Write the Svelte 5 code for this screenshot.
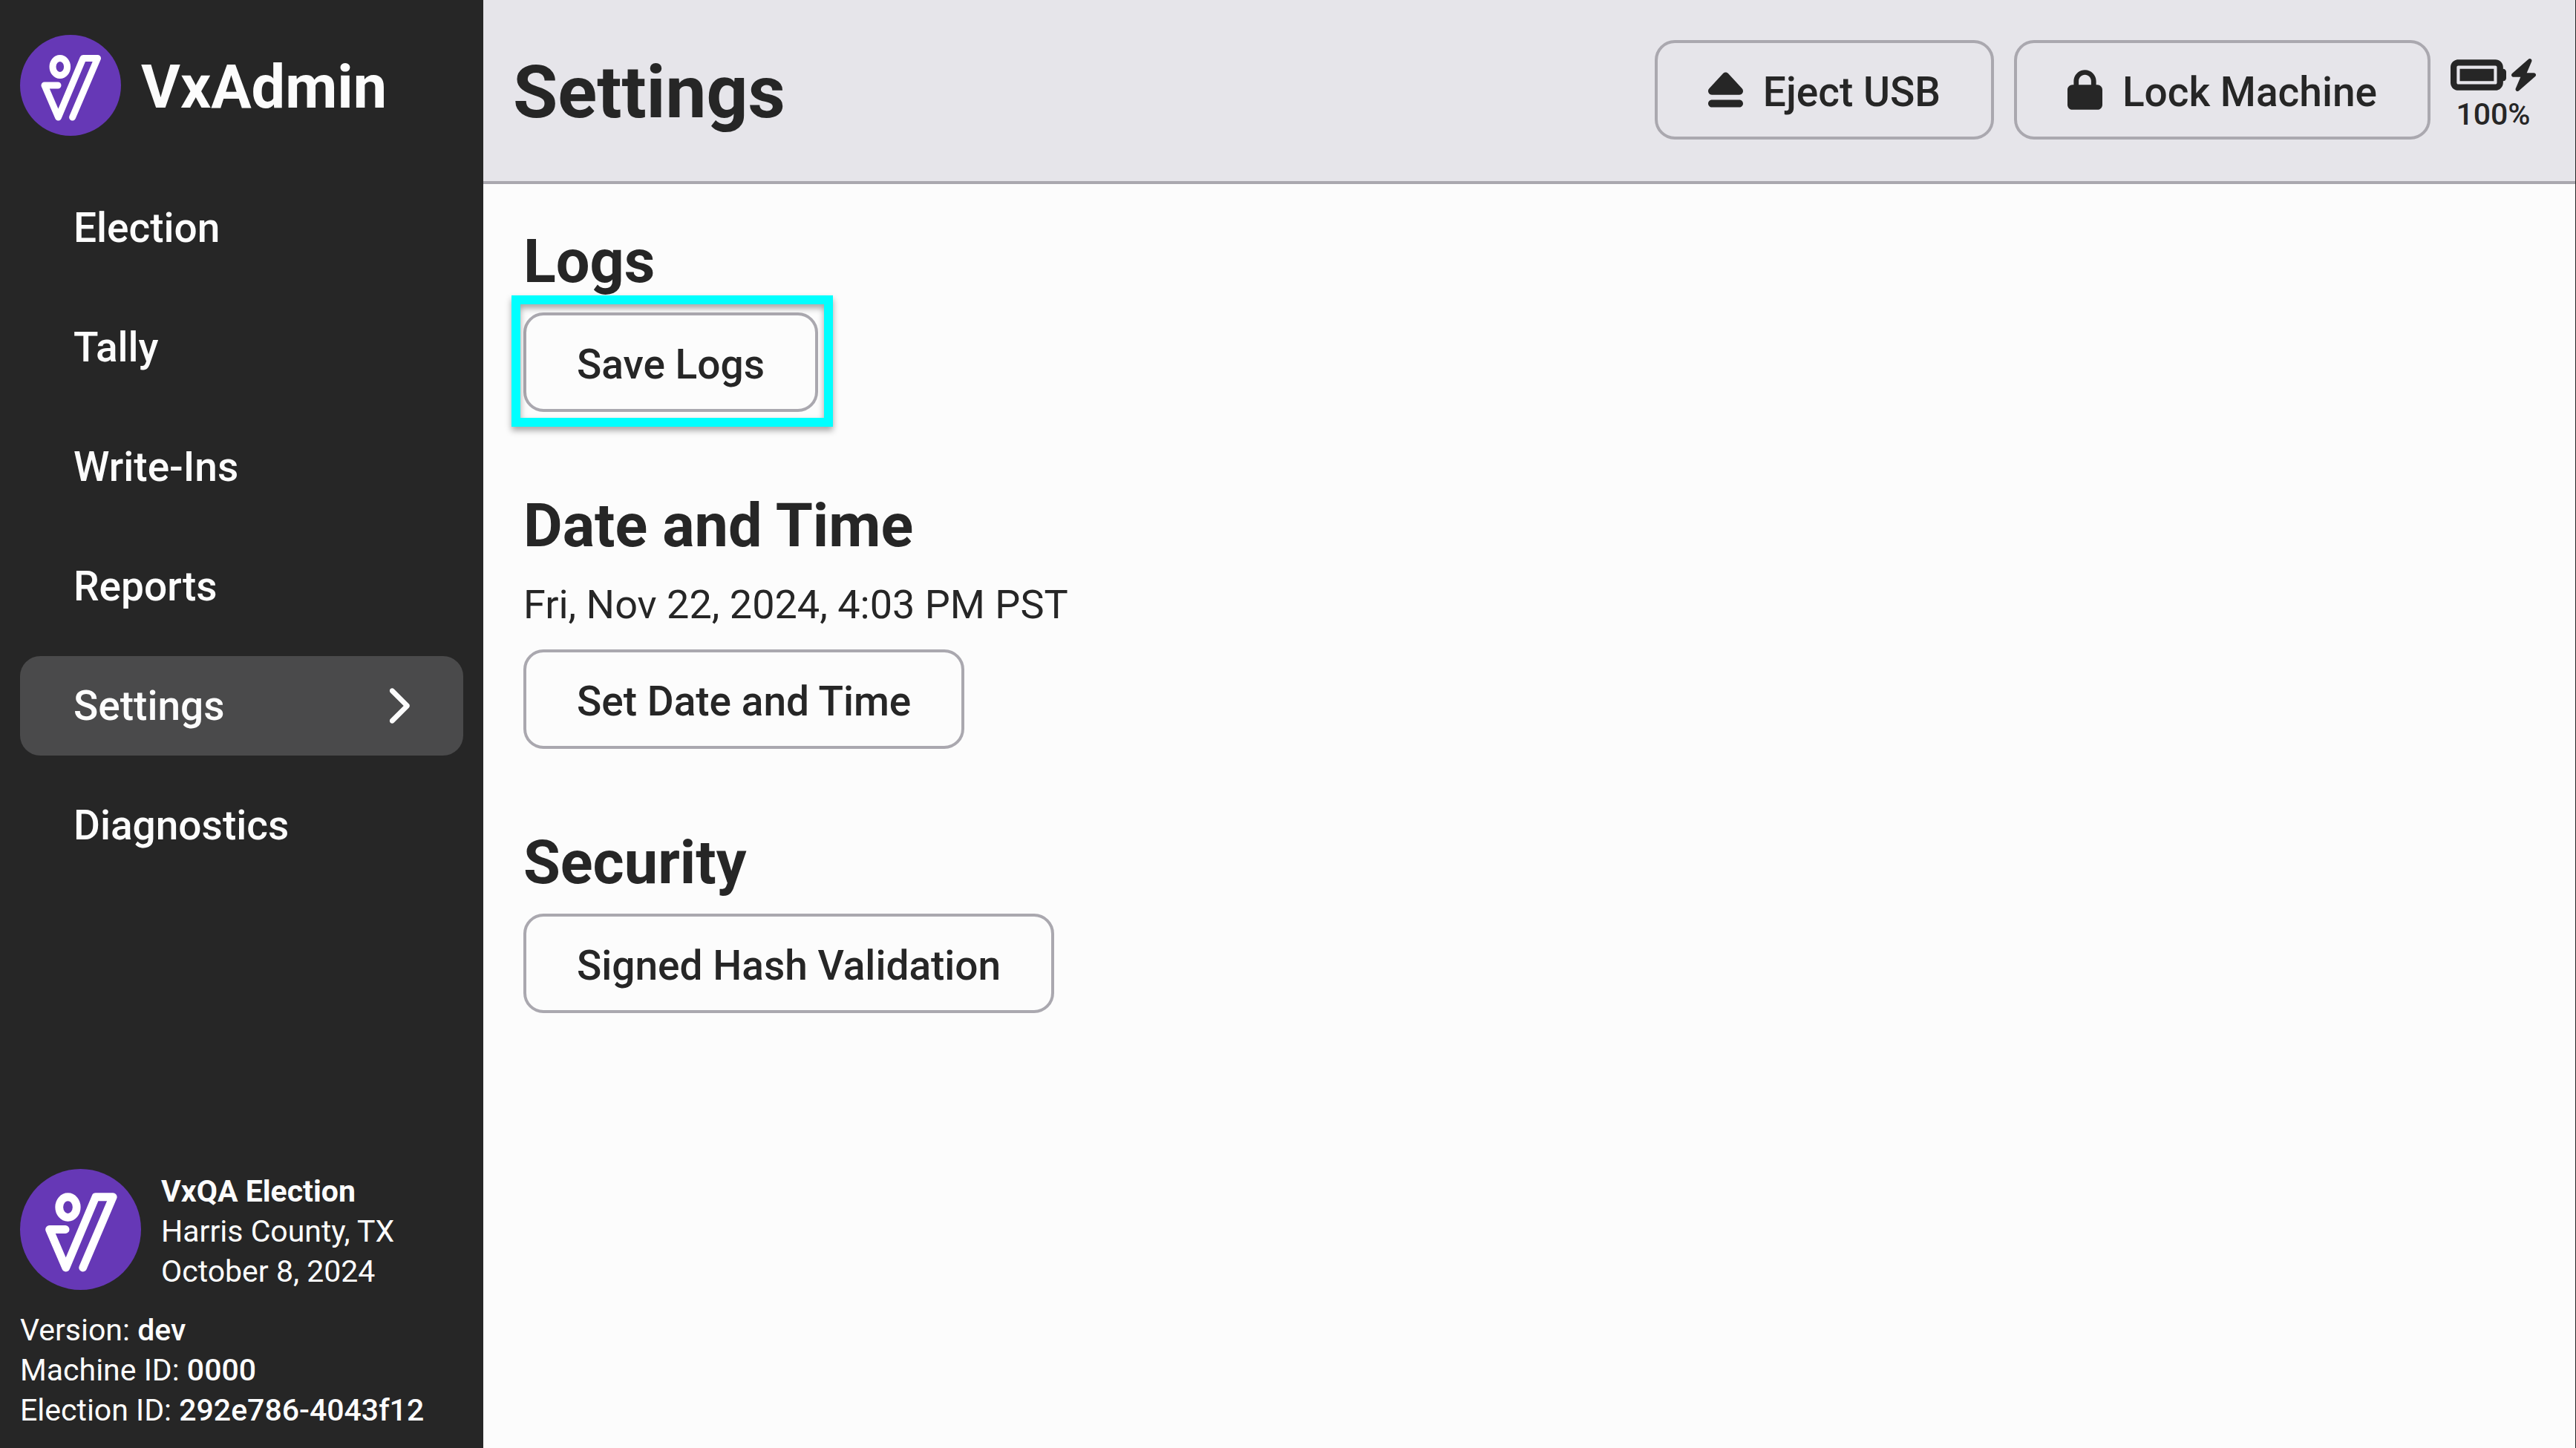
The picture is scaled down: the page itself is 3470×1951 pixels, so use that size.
<script>
  const navItems = ['Election', 'Tally', 'Write-Ins', 'Reports', 'Settings', 'Diagnostics'];
  let current = $state('Settings');

  const machine = [
    { label: 'Version', value: 'dev' },
    { label: 'Machine ID', value: '0000' },
    { label: 'Election ID', value: '292e786-4043f12' },
  ];
</script>

{#snippet logo()}
  <svg class="logo" viewBox="0 0 136 136" aria-hidden="true">
    <circle cx="68" cy="68" r="68" fill="#6638b6" />
    <g fill="none" stroke="#fff" stroke-width="9" stroke-linecap="round" stroke-linejoin="round">
      <ellipse cx="53.8" cy="43" rx="9.8" ry="11.5" />
      <path d="M51 68H33L51.5 111L85 31.5H104.5L70.6 111" />
    </g>
  </svg>
{/snippet}

<div class="app">
  <aside class="sidebar">
    <div class="brand">
      {@render logo()}
      <span class="brand-name">VxAdmin</span>
    </div>

    <nav class="nav">
      {#each navItems as item}
        <a
          href="#{item}"
          class="nav-item"
          class:active={item === current}
          aria-current={item === current ? 'page' : undefined}
          onclick={() => (current = item)}
        >
          {item}
          {#if item === current}
            <svg class="chevron" viewBox="0 0 320 512" aria-hidden="true">
              <path d="M310.6 233.4c12.5 12.5 12.5 32.8 0 45.3l-192 192c-12.5 12.5-32.8 12.5-45.3 0s-12.5-32.8 0-45.3L242.7 256 73.4 86.6c-12.5-12.5-12.5-32.8 0-45.3s32.8-12.5 45.3 0l192 192z" />
            </svg>
          {/if}
        </a>
      {/each}
    </nav>

    <footer class="info">
      <div class="election">
        {@render logo()}
        <div class="election-text">
          <div class="election-title">VxQA Election</div>
          <div>Harris County, TX</div>
          <div>October 8, 2024</div>
        </div>
      </div>
      <div>
        {#each machine as row}
          <div>{row.label}: <span class="value">{row.value}</span></div>
        {/each}
      </div>
    </footer>
  </aside>

  <div class="page">
    <header class="header">
      <h1>Settings</h1>
      <div class="actions">
        <button class="button">
          <svg class="icon" viewBox="0 0 448 512" aria-hidden="true">
            <path d="M224 32c13.5 0 26.3 5.6 35.4 15.6l176 192c12.9 14 16.2 34.3 8.6 51.8S419 320 400 320L48 320c-19 0-36.3-11.2-43.9-28.7s-4.3-37.7 8.6-51.8l176-192C197.7 37.6 210.5 32 224 32zM0 432c0-26.5 21.5-48 48-48l352 0c26.5 0 48 21.5 48 48s-21.5 48-48 48L48 480c-26.5 0-48-21.5-48-48z" />
          </svg>
          <span class="label">Eject USB</span>
        </button>
        <button class="button">
          <svg class="icon" viewBox="0 0 448 512" aria-hidden="true">
            <path d="M144 144l0 48 160 0 0-48c0-44.2-35.8-80-80-80s-80 35.8-80 80zM80 192l0-48C80 64.5 144.5 0 224 0s144 64.5 144 144l0 48 16 0c35.3 0 64 28.7 64 64l0 192c0 35.3-28.7 64-64 64L64 512c-35.3 0-64-28.7-64-64L0 256c0-35.3 28.7-64 64-64l16 0z" />
          </svg>
          <span class="label">Lock Machine</span>
        </button>
        <div class="battery">
          <div class="battery-icons">
            <svg class="cell" viewBox="0 96 576 320" aria-hidden="true">
              <path d="M464 160c8.8 0 16 7.2 16 16l0 160c0 8.8-7.2 16-16 16L80 352c-8.8 0-16-7.2-16-16l0-160c0-8.8 7.2-16 16-16l384 0zM80 96C35.8 96 0 131.8 0 176L0 336c0 44.2 35.8 80 80 80l384 0c44.2 0 80-35.8 80-80l0-16c17.7 0 32-14.3 32-32l0-64c0-17.7-14.3-32-32-32l0-16c0-44.2-35.8-80-80-80L80 96zm368 96L96 192l0 128 352 0 0-128z" />
            </svg>
            <svg class="bolt" viewBox="32 0 384 512" aria-hidden="true">
              <path d="M349.4 44.6c5.9-13.7 1.5-29.7-10.6-38.5s-28.6-8-39.9 1.8l-256 224c-10 8.8-13.6 22.9-8.9 35.3S50.7 288 64 288l111.5 0L98.6 467.4c-5.9 13.7-1.5 29.7 10.6 38.5s28.6 8 39.9-1.8l256-224c10-8.8 13.6-22.9 8.9-35.3s-16.6-20.7-30-20.7l-111.5 0L349.4 44.6z" />
            </svg>
          </div>
          <span>100%</span>
        </div>
      </div>
    </header>

    <main class="content">
      <section>
        <h2>Logs</h2>
        <div class="highlighted">
          <button class="button"><span class="label">Save Logs</span></button>
          <div class="highlight"></div>
        </div>
      </section>
      <section>
        <h2>Date and Time</h2>
        <p>Fri, Nov 22, 2024, 4:03 PM PST</p>
        <button class="button"><span class="label">Set Date and Time</span></button>
      </section>
      <section>
        <h2>Security</h2>
        <button class="button"><span class="label">Signed Hash Validation</span></button>
      </section>
    </main>
  </div>
</div>

<style>
  :global(body) {
    margin: 0;
  }

  .app {
    box-sizing: border-box;
    display: flex;
    min-height: 100vh;
    border-right: 1px solid #262626;
    background: #fcfcfc;
    color: #262626;
    font-family: Roboto, 'Liberation Sans', sans-serif;
    font-size: 54px;
    line-height: 76px;
  }

  svg {
    display: block;
    flex: none;
    fill: currentColor;
  }

  .sidebar {
    box-sizing: border-box;
    display: flex;
    flex: none;
    flex-direction: column;
    width: 651px;
    padding: 47px 27px 24px;
    background: #262626;
    color: #fcfcfc;
  }

  .brand {
    display: flex;
    align-items: center;
    gap: 27px;
    margin-bottom: 57px;
  }

  .brand .logo {
    width: 136px;
    height: 136px;
  }

  .brand-name {
    padding-top: 6px;
    font-size: 81px;
    font-weight: 700;
    line-height: 96px;
  }

  .nav {
    display: flex;
    flex-direction: column;
    gap: 27px;
  }

  .nav-item {
    box-sizing: border-box;
    display: flex;
    align-items: center;
    justify-content: space-between;
    height: 134px;
    padding: 0 72px;
    border-radius: 27px;
    color: inherit;
    font-size: 55px;
    font-weight: 500;
    text-decoration: none;
  }

  .nav-item.active {
    background: #4a4a4b;
  }

  .chevron {
    width: 34px;
    height: 54px;
  }

  .info {
    display: flex;
    flex-direction: column;
    gap: 27px;
    margin-top: auto;
    font-size: 41px;
    line-height: 54px;
  }

  .election {
    display: flex;
    align-items: center;
    gap: 27px;
  }

  .election .logo {
    width: 163px;
    height: 163px;
  }

  .election-text {
    margin-bottom: -4px;
  }

  .election-title {
    font-weight: 700;
  }

  .value {
    font-weight: 500;
  }

  .page {
    display: flex;
    flex: 1;
    flex-direction: column;
    min-width: 0;
  }

  .header {
    display: flex;
    align-items: center;
    justify-content: space-between;
    padding: 54px 53px 56px 40px;
    border-bottom: 4px solid #aaa8af;
    background: #e6e5ea;
  }

  h1,
  h2,
  p {
    margin: 0;
  }

  h1 {
    padding-top: 8px;
    font-size: 98px;
    font-weight: 700;
    line-height: 116px;
  }

  h2 {
    margin-bottom: 20px;
    font-size: 81px;
    font-weight: 700;
    line-height: 96px;
  }

  p {
    margin-bottom: 22px;
  }

  .actions {
    display: flex;
    align-items: center;
    gap: 27px;
  }

  .button {
    box-sizing: border-box;
    display: inline-flex;
    align-items: center;
    gap: 27px;
    height: 134px;
    padding: 0 68px;
    border: 4px solid #aaa8af;
    border-radius: 27px;
    background: transparent;
    color: inherit;
    font: inherit;
    font-size: 55px;
    font-weight: 500;
    white-space: nowrap;
    vertical-align: top;
  }

  .label {
    padding-top: 6px;
  }

  .icon {
    width: 47px;
    height: 54px;
  }

  .battery {
    display: flex;
    flex-direction: column;
    align-items: center;
    gap: 4px;
    padding-top: 18px;
    font-size: 41px;
    font-weight: 500;
    line-height: 54px;
  }

  .battery-icons {
    display: flex;
    align-items: center;
    gap: 7px;
  }

  .cell {
    width: 75px;
    height: 42px;
  }

  .bolt {
    width: 33px;
    height: 44px;
  }

  .content {
    display: flex;
    flex-direction: column;
    gap: 106px;
    padding: 57px 54px;
  }

  .highlighted {
    position: relative;
    width: fit-content;
  }

  .highlight {
    position: absolute;
    inset: -23px -20px -20px -16px;
    border: 12px solid #00ffff;
    filter: drop-shadow(0 5px 4px rgba(0, 0, 0, 0.35));
    pointer-events: none;
  }
</style>
